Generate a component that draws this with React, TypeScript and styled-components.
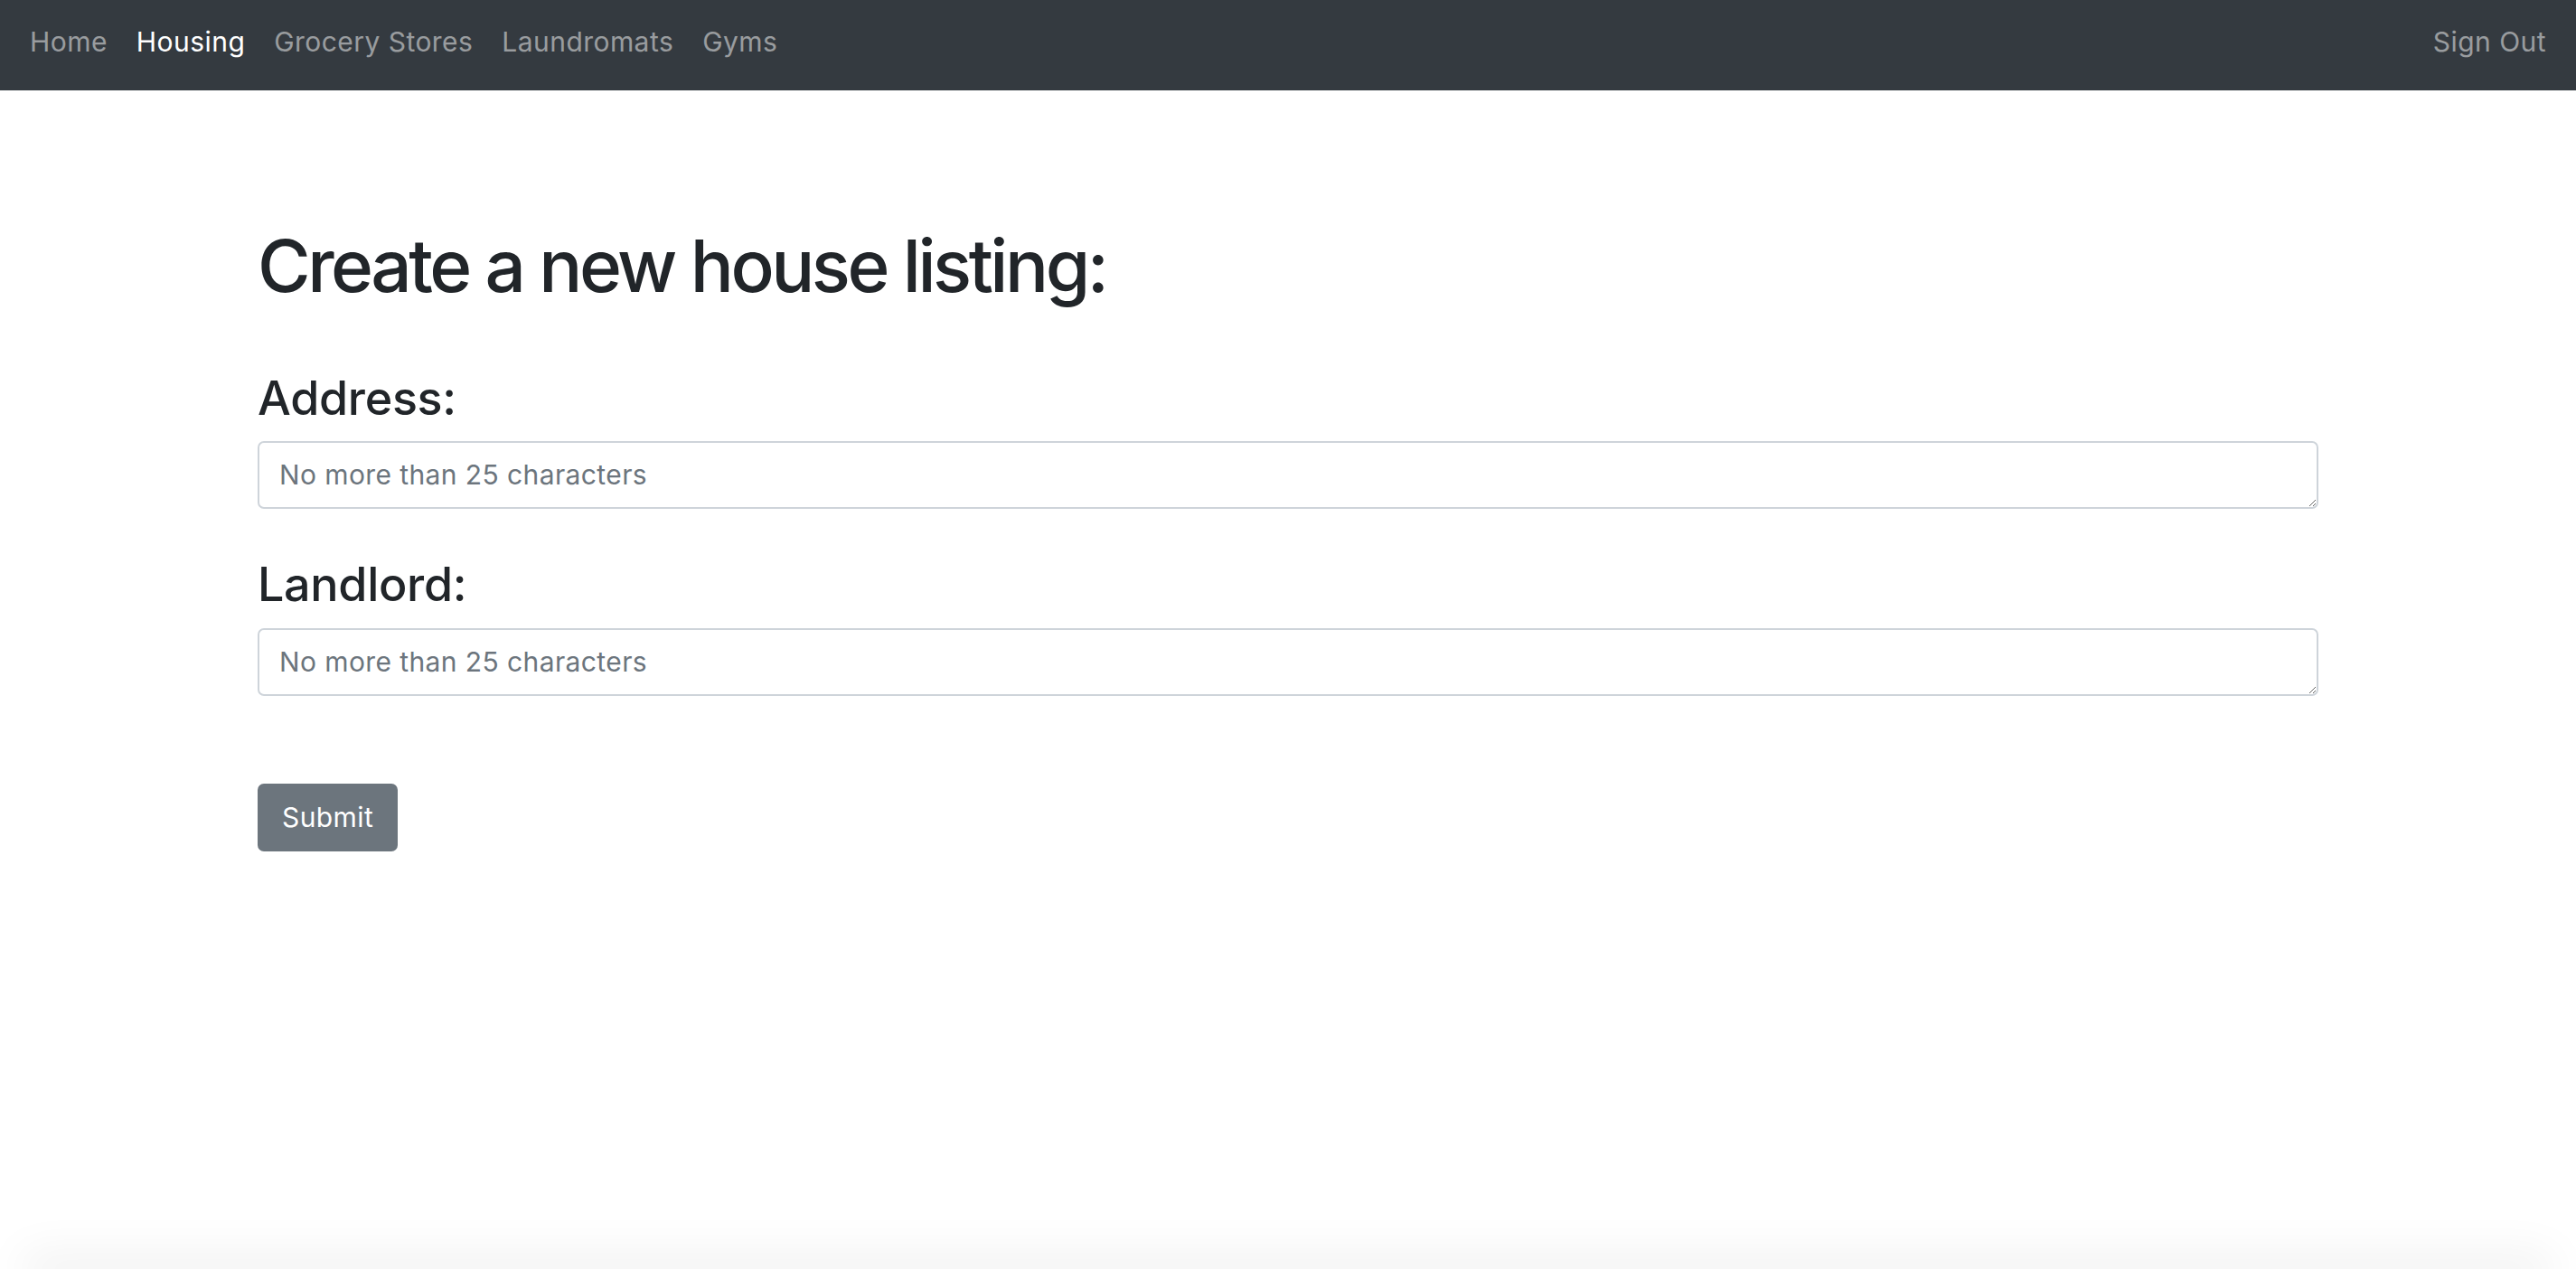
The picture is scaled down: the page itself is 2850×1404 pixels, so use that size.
import styled, { createGlobalStyle } from 'styled-components';

const GlobalStyle = createGlobalStyle`
  html, body {
    margin: 0;
    padding: 0;
    background: #fff;
    font-family: Inter, "Noto Sans", "Liberation Sans", sans-serif;
    color: #212529;
  }
  * { box-sizing: border-box; }
`;

const Page = styled.div`
  height: 100vh;
  display: flex;
  flex-direction: column;
  overflow: hidden;
`;

const NavBar = styled.nav`
  height: 100px;
  flex-shrink: 0;
  background: #343a40;
  display: flex;
  align-items: center;
  justify-content: space-between;
  padding: 0 17px 7px;
`;

const NavList = styled.div`
  display: flex;
  align-items: center;
`;

const NavLink = styled.a<{ $active?: boolean }>`
  padding: 0 16px;
  font-size: 30px;
  letter-spacing: 0.45px;
  line-height: 43px;
  text-decoration: none;
  cursor: pointer;
  color: ${p => (p.$active ? '#ffffff' : 'rgba(255, 255, 255, 0.5)')};
`;

const Main = styled.main`
  flex: 1;
  width: 80%;
  margin: 0 auto;
  padding-top: 146px;
`;

const Title = styled.h1`
  margin: 0 0 68px;
  font-size: 80px;
  font-weight: 500;
  letter-spacing: -3.5px;
  line-height: 1.2;
`;

const Field = styled.div`
  margin-bottom: 53px;
`;

const Label = styled.h3`
  margin: 0 0 16px;
  font-size: 52px;
  font-weight: 500;
  letter-spacing: -0.3px;
  line-height: 1.2;
`;

const TextArea = styled.textarea`
  display: block;
  width: 100%;
  height: 75px;
  padding: 14px 22px;
  font-family: inherit;
  font-size: 30px;
  letter-spacing: 0.4px;
  line-height: 43px;
  color: #495057;
  border: 2px solid #ced4da;
  border-radius: 7px;
  resize: vertical;
  outline: none;

  &::placeholder {
    color: #6c757d;
  }
`;

const SubmitButton = styled.button`
  margin-top: 44px;
  height: 75px;
  padding: 0 27px;
  display: inline-flex;
  align-items: center;
  font-family: inherit;
  font-size: 30px;
  letter-spacing: 0.4px;
  color: #fff;
  background: #6c757d;
  border: none;
  border-radius: 7px;
  cursor: pointer;
`;

const Footer = styled.footer`
  height: 0;
  flex-shrink: 0;
  margin: 0 40px;
  box-shadow: 0 0 50px 14px rgba(0, 0, 0, 0.08);
`;

const links = ['Home', 'Housing', 'Grocery Stores', 'Laundromats', 'Gyms'];

const App = () => {
  return (
    <>
      <GlobalStyle />
      <Page>
        <NavBar>
          <NavList>
            {links.map(l => (
              <NavLink key={l} $active={l === 'Housing'}>{l}</NavLink>
            ))}
          </NavList>
          <NavLink>Sign Out</NavLink>
        </NavBar>
        <Main>
          <Title>Create a new house listing:</Title>
          <form onSubmit={e => e.preventDefault()}>
            <Field>
              <Label>Address:</Label>
              <TextArea rows={1} placeholder="No more than 25 characters" />
            </Field>
            <Field>
              <Label>Landlord:</Label>
              <TextArea rows={1} placeholder="No more than 25 characters" />
            </Field>
            <SubmitButton type="submit">Submit</SubmitButton>
          </form>
        </Main>
        <Footer />
      </Page>
    </>
  );
};

export default App;
